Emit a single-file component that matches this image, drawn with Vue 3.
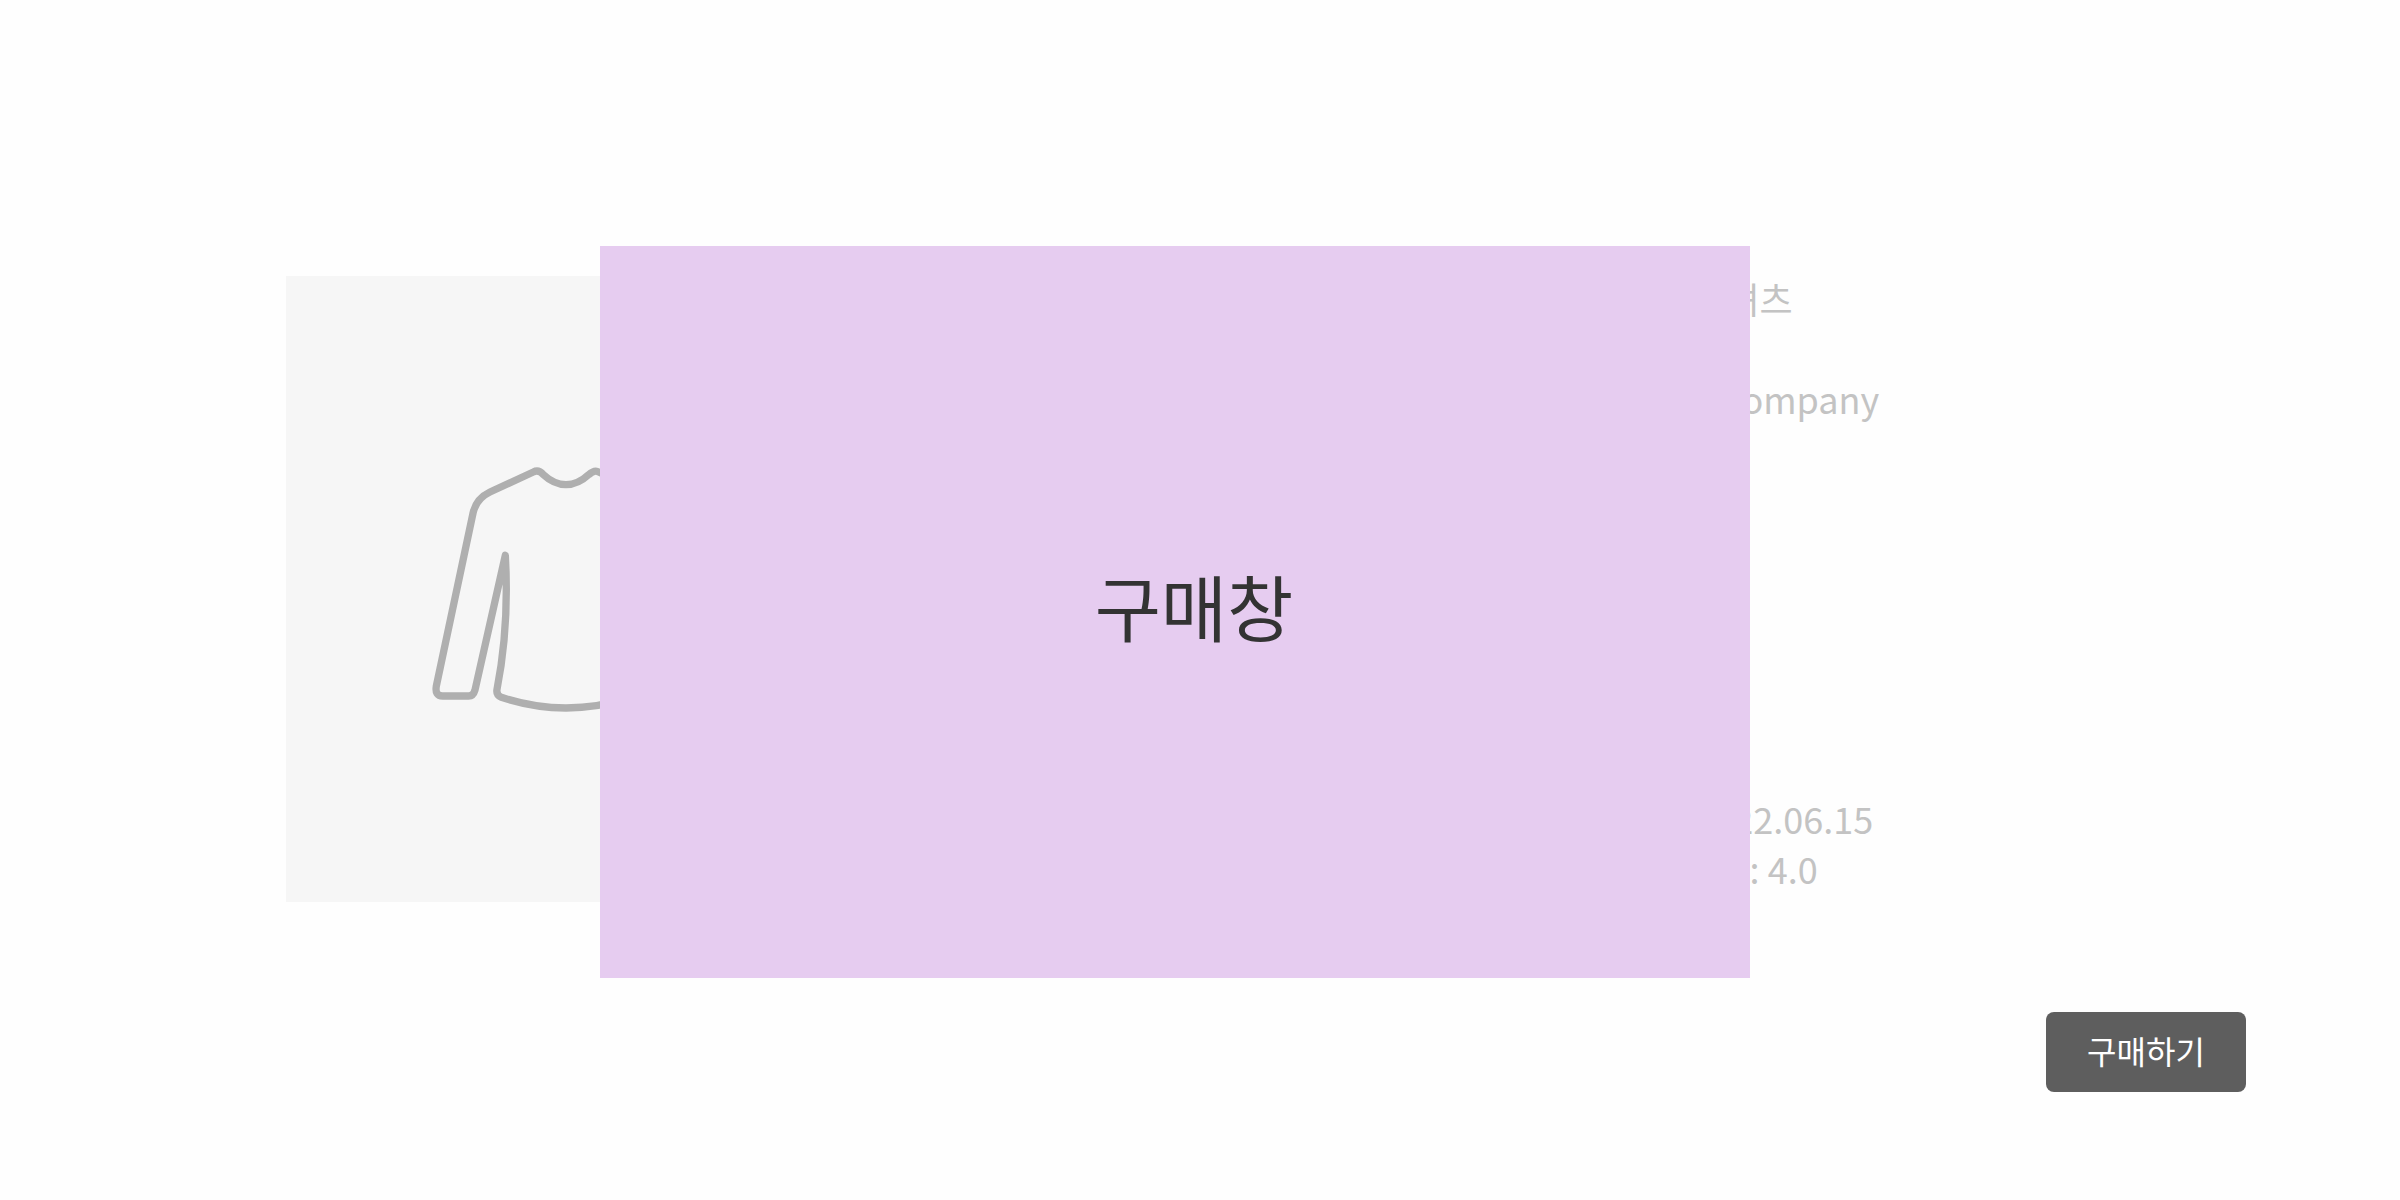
<script setup>
import { ref } from 'vue'

const open = ref(true)
const summary = ['상품명 : 셔츠', '브랜드: Company']
const details = ['날짜 : 2022.06.15', '평균 평점 : 4.0']
</script>

<template>
  <main class="page">
    <section class="product">
      <figure class="photo">
        <svg class="shirt" viewBox="0 12 876 870" role="img" aria-label="셔츠">
          <path
            d="M438 134 Q402 134 370 104 Q356 88 340 96 L210 156 Q168 176 159 220 L49 738 Q44 768 68 768 L146 768 Q160 768 165 750 L256 346 Q268 560 231 748 Q228 766 244 772 Q340 804 438 804 Q536 804 632 772 Q648 766 645 748 Q608 560 620 346 L711 750 Q716 768 730 768 L808 768 Q832 768 827 738 L717 220 Q708 176 666 156 L536 96 Q524 88 506 104 Q474 134 438 134 Z"
          />
        </svg>
      </figure>
      <div class="info">
        <div class="summary">
          <p v-for="line in summary" :key="line">{{ line }}</p>
        </div>
        <div class="details">
          <p v-for="line in details" :key="line">{{ line }}</p>
        </div>
      </div>
    </section>

    <div class="actions">
      <button class="buy" type="button" @click="open = true">구매하기</button>
    </div>

    <div v-if="open" class="modal" role="dialog" aria-labelledby="modal-title">
      <h1 id="modal-title">구매창</h1>
    </div>
  </main>
</template>

<style>
body {
  background: #fefefe;
}
</style>

<style scoped>
.page {
  position: relative;
  box-sizing: border-box;
  min-height: 100vh;
  padding: 276px 154px 108px 286px;
  font-family: "Noto Sans CJK KR", "Noto Sans", sans-serif;
}

.product {
  display: flex;
  justify-content: space-between;
  padding-right: 345px;
}

.photo {
  display: flex;
  align-items: center;
  justify-content: center;
  width: 560px;
  height: 626px;
  margin: 0;
  background: #f6f6f6;
}

.shirt {
  width: 292px;
  height: 290px;
  fill: none;
  stroke: #afafaf;
  stroke-width: 22;
  stroke-linejoin: round;
}

.info {
  display: flex;
  flex-direction: column;
  justify-content: space-between;
  width: 300px;
  margin-top: -3px;
  color: #c3c3c3;
  font-size: 36px;
  line-height: 50px;
}

.info p {
  margin: 0;
}

.summary {
  display: grid;
  gap: 50px;
}

.details {
  padding-bottom: 9px;
}

.actions {
  display: flex;
  justify-content: flex-end;
  padding-top: 110px;
}

.buy {
  width: 200px;
  height: 80px;
  padding: 0 0 4px;
  border: 0;
  border-radius: 8px;
  background: #5e5e5e;
  color: #fff;
  font-family: inherit;
  font-size: 32px;
  cursor: pointer;
}

.modal {
  position: absolute;
  top: 246px;
  left: 25%;
  display: flex;
  align-items: center;
  justify-content: center;
  box-sizing: border-box;
  width: 1150px;
  height: 732px;
  padding: 0 0 16px 38px;
  background: #e6ccf0;
}

.modal h1 {
  margin: 0;
  color: #333;
  font-size: 72px;
  font-weight: 400;
}
</style>
